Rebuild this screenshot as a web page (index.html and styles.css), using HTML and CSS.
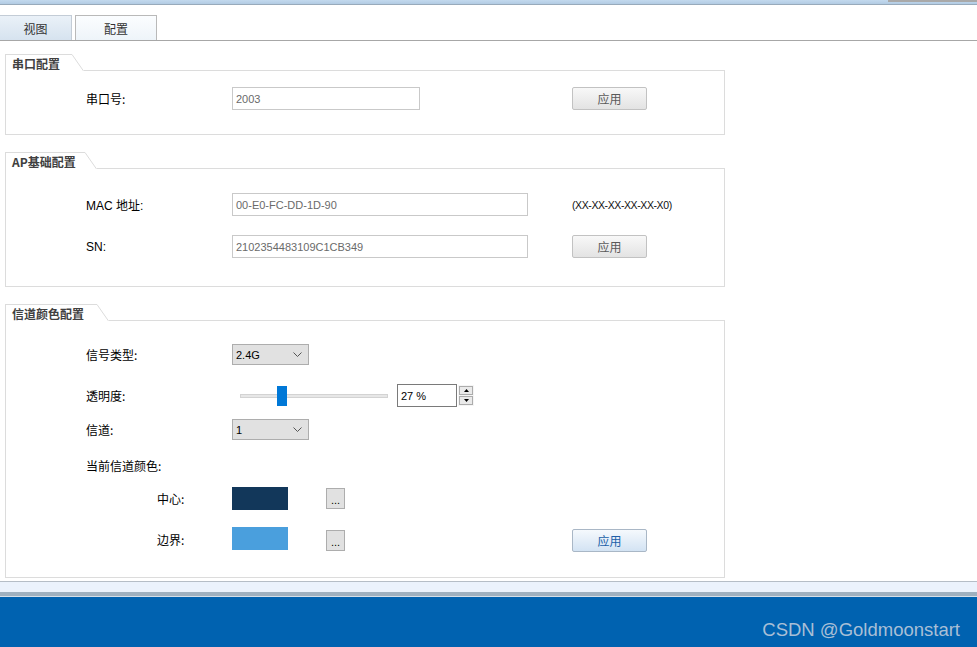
FILE: index.html
```html
<!DOCTYPE html>
<html lang="zh">
<head>
<meta charset="utf-8">
<title>配置</title>
<link rel="stylesheet" href="styles.css">
</head>
<body>
<div class="topbar"><span class="topbar-grip"></span></div>
<div class="tabs">
  <div class="tab tab-view">视图</div>
  <div class="tab tab-config">配置</div>
</div>
<main class="main">
  <section class="sec">
    <div class="sec-head">
      <div class="sec-title">串口配置</div>
      <svg class="sec-slant" width="12" height="17" viewBox="0 0 12 17"><path d="M0 0.5 L11.5 17" stroke="#dcdcdc" stroke-width="1" fill="none"/></svg>
      <div class="sec-fill"></div>
    </div>
    <div class="sec-box box1">
      <div class="row r-serial">
        <span class="lbl">串口号:</span>
        <span class="inp inp-short">2003</span>
        <button class="btn">应用</button>
      </div>
    </div>
  </section>

  <section class="sec sec-gap">
    <div class="sec-head">
      <div class="sec-title">AP基础配置</div>
      <svg class="sec-slant" width="12" height="17" viewBox="0 0 12 17"><path d="M0 0.5 L11.5 17" stroke="#dcdcdc" stroke-width="1" fill="none"/></svg>
      <div class="sec-fill"></div>
    </div>
    <div class="sec-box box2">
      <div class="row r-mac">
        <span class="lbl">MAC 地址:</span>
        <span class="inp inp-long">00-E0-FC-DD-1D-90</span>
        <span class="hint">(XX-XX-XX-XX-XX-X0)</span>
      </div>
      <div class="row r-sn">
        <span class="lbl">SN:</span>
        <span class="inp inp-long">2102354483109C1CB349</span>
        <button class="btn">应用</button>
      </div>
    </div>
  </section>

  <section class="sec sec-gap">
    <div class="sec-head">
      <div class="sec-title">信道颜色配置</div>
      <svg class="sec-slant" width="12" height="17" viewBox="0 0 12 17"><path d="M0 0.5 L11.5 17" stroke="#dcdcdc" stroke-width="1" fill="none"/></svg>
      <div class="sec-fill"></div>
    </div>
    <div class="sec-box box3">
      <div class="row r-type">
        <span class="lbl">信号类型:</span>
        <span class="sel">2.4G<svg class="chev" width="9" height="5" viewBox="0 0 9 5"><path d="M0.5 0.5 L4.5 4.5 L8.5 0.5" stroke="#555" fill="none"/></svg></span>
      </div>
      <div class="row r-alpha">
        <span class="lbl">透明度:</span>
        <span class="slider-wrap">
          <span class="track"><span class="thumb"></span></span>
          <span class="num">27 %</span>
          <span class="spin">
            <span class="spin-btn"><svg width="5" height="3" viewBox="0 0 5 3"><path d="M0 3 L2.5 0 L5 3Z" fill="#000"/></svg></span>
            <span class="spin-btn"><svg width="5" height="3" viewBox="0 0 5 3"><path d="M0 0 L2.5 3 L5 0Z" fill="#000"/></svg></span>
          </span>
        </span>
      </div>
      <div class="row r-chan">
        <span class="lbl">信道:</span>
        <span class="sel">1<svg class="chev" width="9" height="5" viewBox="0 0 9 5"><path d="M0.5 0.5 L4.5 4.5 L8.5 0.5" stroke="#555" fill="none"/></svg></span>
      </div>
      <div class="row r-cur">
        <span class="lbl">当前信道颜色:</span>
      </div>
      <div class="row sub r-center">
        <span class="lbl">中心:</span>
        <span class="color-cell"><span class="swatch sw-center"></span><span class="dots">...</span></span>
      </div>
      <div class="row sub r-edge">
        <span class="lbl">边界:</span>
        <span class="color-cell"><span class="swatch sw-edge"></span><span class="dots">...</span></span>
        <button class="btn btn-blue">应用</button>
      </div>
    </div>
  </section>
</main>
<footer class="footer">
  <div class="foot-light"></div>
  <div class="foot-band"></div>
  <div class="foot-blue"><span class="mark">CSDN @Goldmoonstart</span></div>
</footer>
</body>
</html>
```

FILE: styles.css
```css
* { box-sizing: border-box; }
html, body { margin: 0; padding: 0; }
body {
  width: 977px;
  height: 647px;
  overflow: hidden;
  display: flex;
  flex-direction: column;
  background: #fff;
  font-family: "Liberation Sans", "Noto Sans CJK SC", sans-serif;
  font-size: 12px;
  color: #000;
}

.topbar {
  height: 5px;
  background: linear-gradient(#c3d9ee, #b2cbe3);
  border-bottom: 1px solid #98aabb;
  position: relative;
  flex: none;
}
.topbar-grip {
  position: absolute;
  right: 0;
  top: 0;
  width: 89px;
  height: 2px;
  background: #a9a9a9;
}

.tabs {
  flex: none;
  display: flex;
  margin-top: 10px;
  height: 26px;
  border-bottom: 1px solid #a7a7a7;
}
.tab {
  height: 25px;
  display: flex;
  align-items: center;
  justify-content: center;
  border: 1px solid #b4b4b4;
  border-bottom: none;
  color: #333;
  font-size: 12px;
  font-family: "Noto Sans CJK SC", sans-serif;
}
.tab-view {
  width: 72px;
  background: linear-gradient(#eaf1f8, #d6e3ef);
  border-color: #c3ccd6;
  border-left: none;
}
.tab-config {
  width: 82px;
  margin-left: 3px;
  background: linear-gradient(#fbfdff, #eef4f9);
  border-color: #b9b9b9;
}

.main {
  flex: 1;
  padding: 13px 0 0 5px;
}
.sec { width: 720px; }
.sec-gap { margin-top: 17px; }

.sec-head {
  display: flex;
  height: 17px;
}
.sec-title {
  border-top: 1px solid #dcdcdc;
  border-left: 1px solid #dcdcdc;
  padding: 1px 0 0 6px;
  font-weight: bold;
  font-size: 12px;
  color: #404040;
  line-height: 16px;
  font-family: "Noto Sans CJK SC", sans-serif;
  white-space: nowrap;
}
.sec-slant { flex: none; display: block; }
.sec-fill { flex: 1; border-bottom: 1px solid #dcdcdc; }

.sec-box {
  border: 1px solid #dcdcdc;
  border-top: none;
  padding-left: 80px;
  display: flex;
  flex-direction: column;
}
.box1 { height: 64px; padding-top: 16px; }
.box2 { height: 118px; padding-top: 24px; }
.box3 { height: 257px; padding-top: 23px; }

.sec:nth-child(1) .sec-title { width: 67px; }
.sec:nth-child(2) .sec-title { width: 80px; }
.sec:nth-child(3) .sec-title { width: 92px; }

.row {
  display: grid;
  grid-template-columns: 146px 340px auto;
  align-items: center;
}
.row.sub .lbl { padding-left: 71px; }

.lbl {
  font-family: "Noto Sans CJK SC", sans-serif;
  font-size: 12px;
  white-space: nowrap;
}
.r-mac .lbl, .r-sn .lbl { font-family: "Liberation Sans", "Noto Sans CJK SC", sans-serif; }

.r-serial { height: 23px; }
.r-mac { height: 23px; }
.r-sn { height: 23px; margin-top: 19px; }

.r-type { height: 21px; }
.r-alpha { height: 25px; margin-top: 18px; }
.r-chan { height: 21px; margin-top: 11px; }
.r-cur { height: 16px; margin-top: 17px; }
.r-center { height: 23px; margin-top: 14px; }
.r-edge { height: 25px; margin-top: 17px; align-items: start; }
.r-edge .lbl { align-self: center; }

.inp {
  display: flex;
  align-items: center;
  height: 23px;
  border: 1px solid #c9c9c9;
  padding-left: 3px;
  color: #6a6a6a;
  font-size: 11px;
  background: #fff;
}
.inp-short { width: 188px; }
.inp-long { width: 296px; }

.hint { font-size: 10.5px; letter-spacing: -0.4px; color: #111; }

.btn {
  width: 75px;
  height: 23px;
  border: 1px solid #c2c2c2;
  border-radius: 2px;
  background: linear-gradient(#f8f8f8, #e3e3e3);
  color: #5a5a5a;
  font-size: 12px;
  font-family: "Noto Sans CJK SC", sans-serif;
  padding: 0;
  line-height: 20px;
}
.btn-blue {
  margin-top: 2px;
  background: linear-gradient(#f5f9fd, #d3e3f3);
  border-color: #a9b7c6;
  color: #2060a8;
}

.sel {
  position: relative;
  display: flex;
  align-items: center;
  width: 77px;
  height: 21px;
  border: 1px solid #adadad;
  background: #e1e1e1;
  padding-left: 3px;
  font-size: 11px;
  color: #000;
}
.chev { position: absolute; right: 6px; top: 7px; }

.slider-wrap {
  display: flex;
  align-items: center;
  height: 25px;
}
.track {
  position: relative;
  margin-left: 8px;
  width: 148px;
  height: 4px;
  background: #e7e7e7;
  border: 1px solid #d3d3d3;
}
.thumb {
  position: absolute;
  left: 36px;
  top: -9px;
  width: 10px;
  height: 20px;
  background: #0078d7;
}
.num {
  display: flex;
  align-items: center;
  margin-left: 9px;
  width: 60px;
  height: 23px;
  border: 1px solid #7a7a7a;
  padding-left: 3px;
  font-size: 11px;
  color: #000;
}
.spin {
  display: flex;
  flex-direction: column;
  gap: 1px;
  margin-left: 1px;
  padding: 1px;
  background: #f5f5f5;
}
.spin-btn {
  width: 14px;
  height: 9px;
  border: 1px solid #acacac;
  background: #eaeaea;
  display: flex;
  align-items: center;
  justify-content: center;
}
.spin-btn svg { display: block; }

.color-cell {
  display: flex;
  align-items: center;
}
.swatch { width: 56px; height: 23px; }
.sw-center { background: #12375a; }
.sw-edge { background: #4a9fdd; }
.dots {
  margin-left: 38px;
  width: 19px;
  height: 21px;
  border: 1px solid #adadad;
  background: #e1e1e1;
  font-size: 11px;
  line-height: 22px;
  text-align: center;
  color: #000;
}
.r-edge .dots { margin-top: 3px; align-self: flex-start; }
.r-edge .color-cell { align-items: flex-start; }

.footer {
  flex: none;
  height: 66px;
  display: flex;
  flex-direction: column;
}
.foot-light {
  height: 11px;
  border-top: 1px solid #b5bdc6;
  background: #ebf2fc;
}
.foot-band {
  height: 5px;
  background: #9fb0bf;
  border-bottom: 1px solid #d5dfe9;
}
.foot-blue {
  flex: 1;
  background: #0062b0;
  display: flex;
  justify-content: flex-end;
  align-items: flex-end;
  padding: 0 17px 6px 0;
}
.mark {
  font-family: "Liberation Sans", sans-serif;
  font-size: 18.5px;
  color: #a9bfd6;
}
```
